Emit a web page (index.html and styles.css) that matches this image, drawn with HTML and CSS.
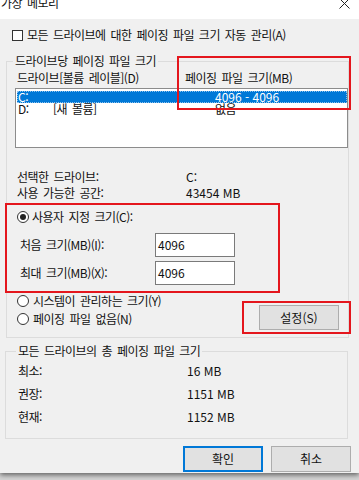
FILE: index.html
```html
<!DOCTYPE html>
<html lang="ko">
<head>
  <meta charset="UTF-8" />
  <meta name="viewport" content="width=device-width, initial-scale=1"/>
  <title>가상 메모리</title>
  <link rel="stylesheet" href="styles.css">
</head>
<body>

  <div class="dialog">

    <!-- Title bar -->
    <div class="titlebar">
      <span class="title">가상 메모리</span>
      <svg class="close" width="11" height="11" viewBox="0 0 11 11">
        <path d="M0.5 0.5 L10.5 10.5 M10.5 0.5 L0.5 10.5" stroke="#222" stroke-width="1" fill="none"/>
      </svg>
    </div>

    <div class="check-row">
      <span class="checkbox"></span>
      <span>모든 드라이브에 대한 페이징 파일 크기 자동 관리(A)</span>
    </div>

    <!-- Per-drive paging file -->
    <fieldset class="group group-drive">
      <legend>드라이브당 페이징 파일 크기</legend>

      <div class="drive-list">
        <div class="list-head">
          <span class="col-drive">드라이브[볼륨 레이블](D)</span>
          <span>페이징 파일 크기(MB)</span>
        </div>
        <div class="list-box">
          <div class="list-row selected">
            <span class="col-letter">C:</span>
            <span class="col-label"></span>
            <span class="num">4096 - 4096</span>
          </div>
          <div class="list-row">
            <span class="col-letter">D:</span>
            <span class="col-label">[새 볼륨]</span>
            <span>없음</span>
          </div>
        </div>
        <div class="mark mark-size"></div>
      </div>

      <div class="info-grid">
        <span>선택한 드라이브:</span><span class="num">C:</span>
        <span>사용 가능한 공간:</span><span class="num">43454 MB</span>
      </div>

      <div class="custom-box">
        <div class="radio-row">
          <span class="radio checked"></span>
          <span>사용자 지정 크기(C):</span>
        </div>
        <div class="size-row">
          <span class="size-label">처음 크기(MB)(I):</span>
          <span class="text-input num">4096</span>
        </div>
        <div class="size-row">
          <span class="size-label">최대 크기(MB)(X):</span>
          <span class="text-input num">4096</span>
        </div>
      </div>

      <div class="bottom-row">
        <div class="radios">
          <div class="radio-row">
            <span class="radio"></span>
            <span>시스템이 관리하는 크기(Y)</span>
          </div>
          <div class="radio-row">
            <span class="radio"></span>
            <span>페이징 파일 없음(N)</span>
          </div>
        </div>
        <div class="set-mark">
          <button class="btn btn-set">설정(S)</button>
        </div>
      </div>
    </fieldset>

    <!-- Totals -->
    <fieldset class="group group-total">
      <legend>모든 드라이브의 총 페이징 파일 크기</legend>
      <div class="total-grid">
        <span>최소:</span><span class="num">16 MB</span>
        <span>권장:</span><span class="num">1151 MB</span>
        <span>현재:</span><span class="num">1152 MB</span>
      </div>
    </fieldset>

    <div class="actions">
      <button class="btn btn-default">확인</button>
      <button class="btn">취소</button>
    </div>
  </div>

</body>
</html>
```

FILE: styles.css
```css
/* Base */
html, body {
  margin: 0;
  padding: 0;
}

body {
  width: 359px;
  height: 480px;
  overflow: hidden;
  background: #d4d4d4;
  font-family: "Noto Sans CJK KR", "Noto Sans", sans-serif;
  font-size: 12px;
  line-height: 16px;
  color: #111;
  letter-spacing: -0.5px;
  word-spacing: 2px;
}

.num {
  letter-spacing: 0;
  word-spacing: 0;
}

.dialog {
  height: 473px;
  background: #f0f0f0;
  box-shadow: 0 2px 5px rgba(0, 0, 0, 0.55);
  overflow: hidden;
}

/* Title bar */
.titlebar {
  height: 19px;
  background: #fff;
  display: flex;
  justify-content: space-between;
  overflow: hidden;
}

.title {
  margin-top: -5px;
  padding-left: 1px;
}

.close {
  margin: -2px 9px 0 0;
}

/* Auto manage checkbox */
.check-row {
  display: flex;
  align-items: center;
  gap: 4px;
  margin: 8px 0 0 12px;
}

.checkbox {
  width: 9px;
  height: 9px;
  border: 1px solid #333;
  background: #fff;
}

/* Group boxes */
.group {
  border: 1px solid #dcdcdc;
  margin: 10px 10px 0 6px;
  padding: 0 0 3px 8px;
  min-width: 0;
}

.group legend {
  padding: 0 2px;
  margin-left: -2px;
}

/* Drive list */
.drive-list {
  position: relative;
  margin-top: 1px;
}

.list-head {
  display: flex;
  padding-left: 2px;
  margin-bottom: 2px;
}

.col-drive {
  width: 168px;
}

.list-box {
  width: 331px;
  height: 56px;
  border: 1px solid #8c8c8c;
  background: #fff;
  padding-top: 2px;
}

.list-row {
  display: flex;
  height: 12px;
  line-height: 12px;
  margin-left: 1px;
  padding-left: 1px;
}

.list-row.selected {
  background: #0078d7;
  color: #fff;
  outline: 1px dotted rgba(255, 255, 255, 0.55);
  outline-offset: -1px;
}

.col-letter {
  width: 35px;
}

.col-label {
  width: 162px;
}

/* Red annotation marks */
.mark {
  position: absolute;
  border: 2px solid #e4161d;
  pointer-events: none;
}

.mark-size {
  left: 162px;
  top: -14px;
  width: 170px;
  height: 50px;
}

/* Selected drive info */
.info-grid {
  display: grid;
  grid-template-columns: 169px auto;
  padding-left: 2px;
  margin-top: 21px;
}

/* Custom size */
.custom-box {
  width: 271px;
  margin: 2px 0 0 -10px;
  border: 2px solid #e4161d;
  padding: 4px 0 6px 0;
}

.radio-row {
  display: flex;
  align-items: center;
  gap: 3px;
  padding-left: 10px;
}

.radio {
  width: 10px;
  height: 10px;
  border: 1px solid #333;
  border-radius: 50%;
  background: #fff;
  position: relative;
}

.radio.checked::after {
  content: "";
  position: absolute;
  left: 2px;
  top: 2px;
  width: 6px;
  height: 6px;
  border-radius: 50%;
  background: #222;
}

.size-row {
  display: flex;
  align-items: center;
  padding-left: 13px;
  margin-top: 4px;
}

.radio-row + .size-row {
  margin-top: 8px;
}

.size-label {
  width: 135px;
}

.text-input {
  width: 76px;
  height: 22px;
  line-height: 22px;
  border: 1px solid #7a7a7a;
  background: #fff;
  padding-left: 2px;
}

/* Other radios and Set button */
.bottom-row {
  display: flex;
  align-items: flex-start;
}

.radios {
  display: flex;
  flex-direction: column;
  gap: 2px;
}

.radios .radio-row {
  padding-left: 2px;
  gap: 4px;
}

.set-mark {
  margin: 8px -3px 0 auto;
  width: 80px;
  border: 2px solid #e4161d;
  padding: 2px 10px 2px 15px;
}

.btn {
  display: block;
  width: 80px;
  height: 26px;
  background: #e1e1e1;
  border: 1px solid #adadad;
  font: inherit;
  color: #111;
  padding: 0;
}

.btn-set {
  height: 25px;
}

.btn-default {
  border: 2px solid #0078d7;
}

/* Totals */
.group-total {
  margin: 5px 11px 0 5px;
  padding: 4px 0 13px 12px;
}

.total-grid {
  display: grid;
  grid-template-columns: 169px auto;
  row-gap: 7px;
}

/* Dialog buttons */
.actions {
  display: flex;
  justify-content: flex-end;
  gap: 8px;
  margin: 7px 8px 0 0;
}
```
